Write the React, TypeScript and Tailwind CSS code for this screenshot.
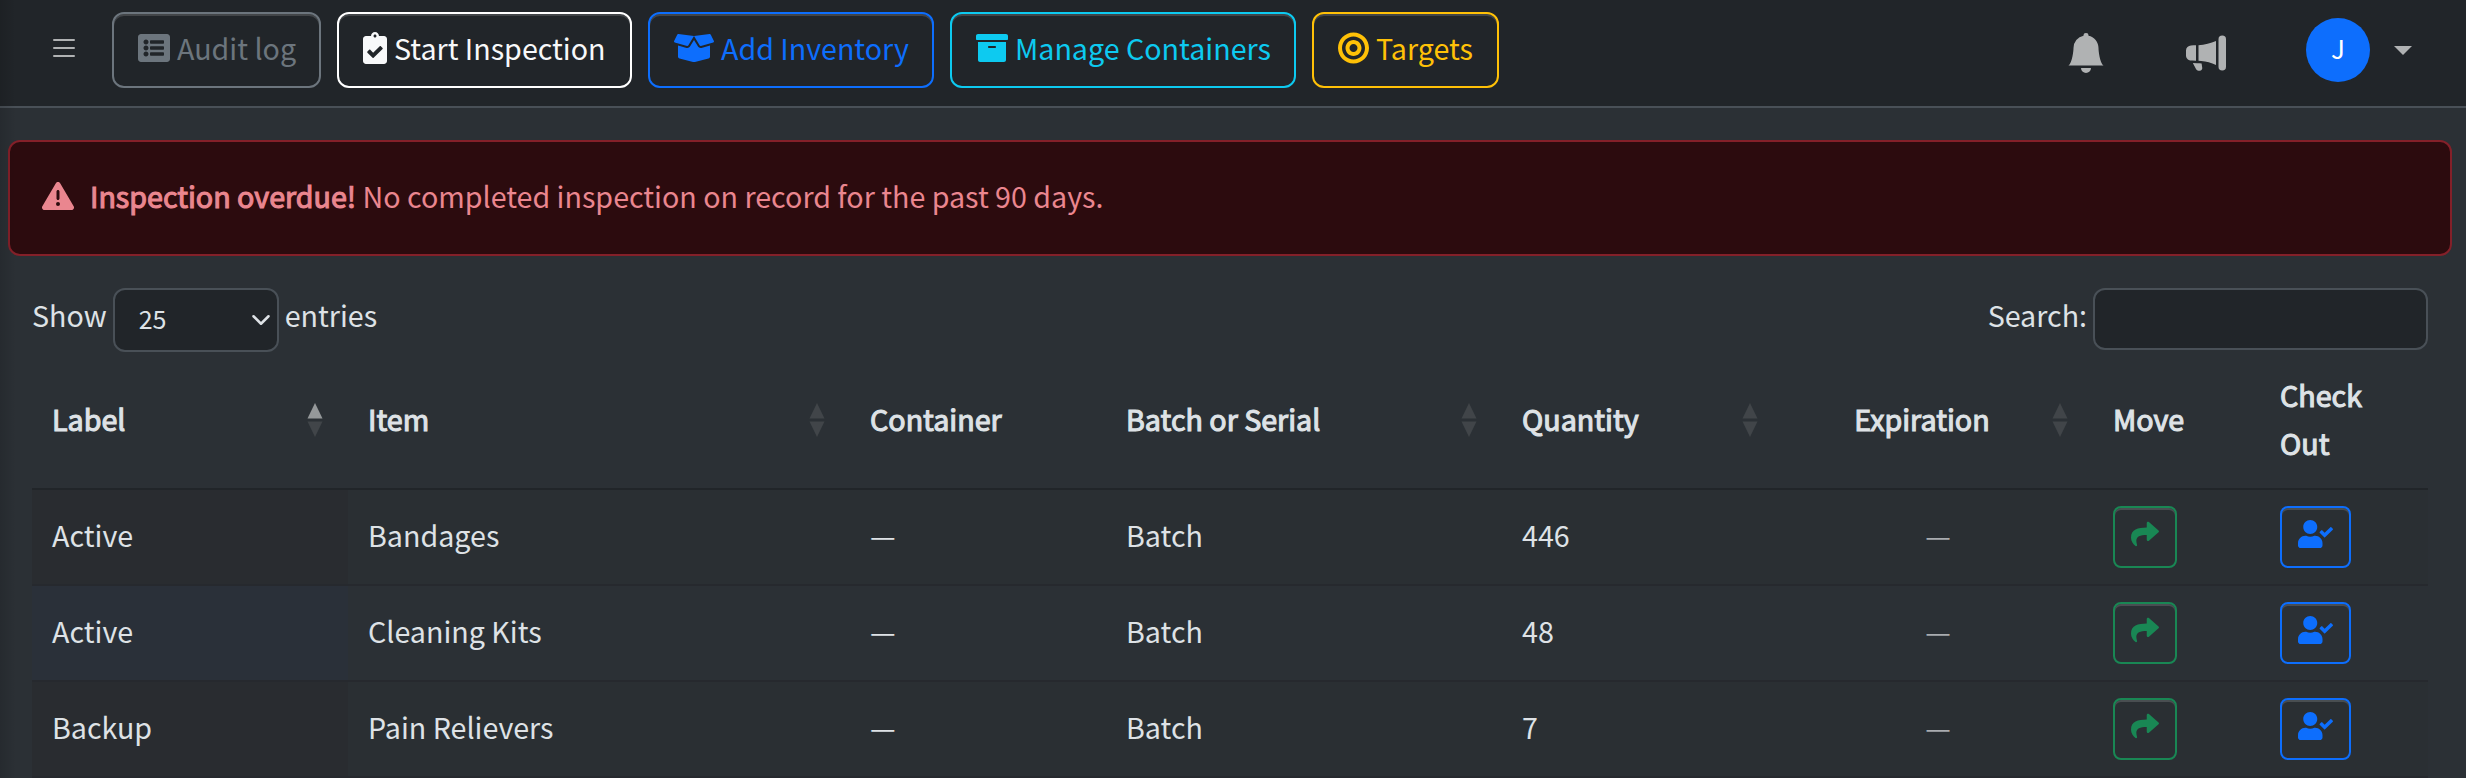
import clsx from "clsx";
import { FaArchive, FaBoxOpen, FaBullseye, FaClipboardCheck, FaListAlt, FaShare, FaUserCheck } from "react-icons/fa";
import { FaTriangleExclamation } from "react-icons/fa6";
import { BsBellFill, BsList, BsMegaphoneFill } from "react-icons/bs";

const actions = [
    { label: "Audit log", icon: FaListAlt, iconWidth: "w-8", style: "w-[209px] border-[#6c757d] text-[#6c757d]" },
    { label: "Start Inspection", icon: FaClipboardCheck, iconWidth: "w-6", style: "w-[295px] border-white text-[#f8f9fa]" },
    { label: "Add Inventory", icon: FaBoxOpen, iconWidth: "w-10", style: "w-[286px] border-[#0d6efd] text-[#0d6efd]" },
    { label: "Manage Containers", icon: FaArchive, iconWidth: "w-8", style: "w-[346px] border-[#0dcaf0] text-[#0dcaf0]" },
    { label: "Targets", icon: FaBullseye, iconWidth: "w-[31px]", style: "w-[187px] border-[#ffc107] text-[#ffc107]" },
];

const columns = [
    { label: "Label", width: "w-[316px]", sort: "asc" },
    { label: "Item", width: "w-[502px]", sort: "none" },
    { label: "Container", width: "w-[256px]" },
    { label: "Batch or Serial", width: "w-[396px]", sort: "none" },
    { label: "Quantity", width: "w-[281px]", sort: "none" },
    { label: "Expiration", width: "w-[310px]", sort: "none", center: true },
    { label: "Move", width: "w-[167px]" },
    { label: "Check Out", width: "w-[168px]" },
];

const items = [
    { label: "Active", name: "Bandages", quantity: 446 },
    { label: "Active", name: "Cleaning Kits", quantity: 48 },
    { label: "Backup", name: "Pain Relievers", quantity: 7 },
];

const buttonShadow = "shadow-[inset_0_2px_0_rgba(255,255,255,0.15)]";
const heavyText = "font-normal [-webkit-text-stroke:1.1px_currentColor]";
const cell = "border-b-2 border-[#26292e] px-5";

function SortArrows({ sort }: { sort: string }) {
    return (
        <svg viewBox="0 0 16 34" className="absolute right-[25px] top-[39px] h-[34px] w-4">
            <path d="M8 0l7.5 15.500H.5z" fill={sort === "asc" ? "#95989a" : "#414549"} />
            <path d="M8 34L.5 18.500h15z" fill="#414549" />
        </svg>
    );
}

function TopBar() {
    return (
        <header className="flex h-[108px] items-start border-b-2 border-[#495057] bg-[#212529] pl-[48px] pr-[54px]">
            <BsList className="mt-8 size-8 text-[#b0b2b3]" />
            <div className="ml-8 mt-3 flex gap-4">
                {actions.map(({ label, icon: Icon, iconWidth, style }) => (
                    <button
                        key={label}
                        className={clsx("flex h-[76px] items-center gap-[7px] whitespace-nowrap rounded-xl border-2 pb-1 pl-6", buttonShadow, style)}
                    >
                        <Icon className={clsx("h-8 shrink-0", iconWidth)} />
                        <span>{label}</span>
                    </button>
                ))}
            </div>
            <div className="ml-auto flex text-[#b0b2b3]">
                <BsBellFill className="mt-[33px] size-10" />
                <BsMegaphoneFill className="ml-20 mt-[33px] size-10" />
                <div className="ml-20 mt-[18px] flex size-16 items-center justify-center rounded-full bg-[#0d6efd] pb-1 text-[26px] text-white">
                    J
                </div>
                <svg viewBox="0 0 18 9" className="ml-6 mt-[46px] h-[9px] w-[18px]">
                    <path d="M0 0h18L9 9z" fill="currentColor" />
                </svg>
            </div>
        </header>
    );
}

export default function App() {
    return (
        <div className="relative h-[778px] w-[2466px] overflow-hidden bg-[#2b3035] font-['Noto_Sans_CJK_SC',sans-serif] text-[28.65px] leading-[48px] text-[#dee2e6]">
            <TopBar />

            {/* Overdue alert */}
            <div className="ml-2 mr-[14px] mt-8 flex h-[116px] items-center rounded-xl border-2 border-[#842029] bg-[#2c0b0e] px-8 pb-1 text-[#ea868f]">
                <FaTriangleExclamation className="size-8" />
                <p className="ml-4">
                    <strong className={heavyText}>Inspection overdue!</strong> No completed inspection on record for the past 90 days.
                </p>
            </div>

            {/* Table controls */}
            <div className="ml-8 mr-[38px] mt-8 flex justify-between">
                <div className="flex items-start">
                    <span className="mt-[3px]">Show</span>
                    <div className="mx-1.5 flex h-16 w-[166px] items-center justify-between rounded-xl border-2 border-[#495057] bg-[#212529] pb-1 pl-6 pr-1.5 text-[25px]">
                        25
                        <svg viewBox="0 0 16 16" className="mt-1 size-5" fill="none" stroke="currentColor" strokeWidth="2">
                            <path d="m2 5 6 6 6-6" strokeLinecap="round" strokeLinejoin="round" />
                        </svg>
                    </div>
                    <span className="mt-[3px]">entries</span>
                </div>
                <div className="flex">
                    <span className="mt-[3px]">Search:</span>
                    <input className="ml-1.5 h-[62px] w-[335px] rounded-xl border-2 border-[#495057] bg-[#212529]" />
                </div>
            </div>

            {/* Inventory table */}
            <table className="mx-8 mt-3 w-[2396px] table-fixed border-separate border-spacing-0">
                <thead>
                    <tr className="h-[126px] text-left">
                        {columns.map(({ label, width, sort, center }) => (
                            <th
                                key={label}
                                className={clsx(
                                    "relative border-b-2 border-[#212529] pb-[15px] pl-5",
                                    heavyText,
                                    width,
                                    sort ? "pr-[52px]" : "pr-5",
                                    center && "text-center",
                                )}
                            >
                                {label}
                                {sort && <SortArrows sort={sort} />}
                            </th>
                        ))}
                    </tr>
                </thead>
                <tbody>
                    {items.map((item, index) => (
                        <tr key={item.name} className={clsx("h-24", index % 2 === 0 && "bg-[#2a2f33]")}>
                            <td className={clsx(cell, "pb-1", index % 2 === 0 ? "bg-[#292c30]" : "bg-[#2a3039]")}>{item.label}</td>
                            <td className={clsx(cell, "pb-1")}>{item.name}</td>
                            <td className={clsx(cell, "pb-1")}>—</td>
                            <td className={clsx(cell, "pb-1")}>Batch</td>
                            <td className={clsx(cell, "pb-1")}>{item.quantity}</td>
                            <td className={clsx(cell, "pb-1 text-center text-[#a9acb0]")}>—</td>
                            <td className={cell}>
                                <button className={clsx("flex h-[62px] w-16 items-start justify-center rounded-lg border-2 border-[#198754] pt-3 text-[#198754]", buttonShadow)}>
                                    <FaShare className="size-7" />
                                </button>
                            </td>
                            <td className={cell}>
                                <button className={clsx("flex h-[62px] w-[71px] items-start justify-center rounded-lg border-2 border-[#0d6efd] pt-3 text-[#0d6efd]", buttonShadow)}>
                                    <FaUserCheck className="h-7 w-[35px]" />
                                </button>
                            </td>
                        </tr>
                    ))}
                </tbody>
            </table>

            {/* Sidebar shadow */}
            <div className="pointer-events-none absolute inset-y-0 left-0 w-4 bg-linear-to-r from-black/12 to-transparent" />
        </div>
    );
}
